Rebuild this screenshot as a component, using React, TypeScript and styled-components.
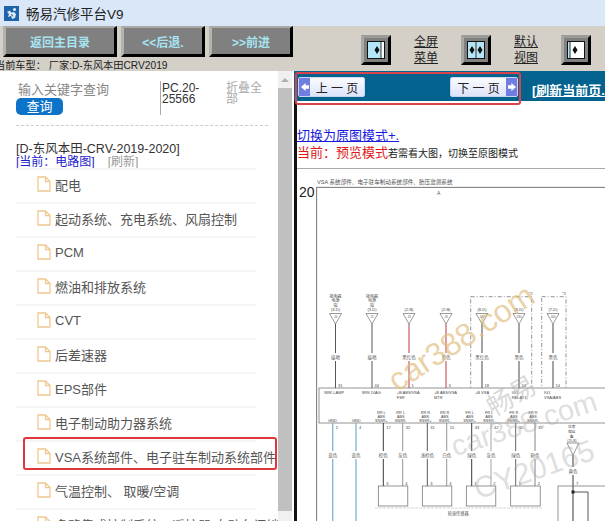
import React from 'react';
import styled, { createGlobalStyle } from 'styled-components';

const GlobalStyle = createGlobalStyle`
  html, body {
    margin: 0;
    padding: 0;
    width: 605px;
    height: 521px;
    overflow: hidden;
    background: #fff;
    font-family: "Liberation Sans", "Noto Sans CJK SC", sans-serif;
  }
`;

const Page = styled.div`
  width: 605px;
  height: 521px;
  display: flex;
  flex-direction: column;
  overflow: hidden;
`;

const TitleBar = styled.div`
  height: 26px;
  flex-shrink: 0;
  background: #d9e7f8;
  display: flex;
  align-items: center;
  gap: 7px;
  padding-left: 4px;
  font-size: 13.5px;
  color: #222;
`;

const Toolbar = styled.div`
  height: 45px;
  flex-shrink: 0;
  background: #d4d0c8;
  position: relative;
  display: flex;
  padding-left: 3px;
  gap: 4px;
`;

const NavButton = styled.div<{ $w: number }>`
  width: ${p => p.$w}px;
  height: 31px;
  box-sizing: border-box;
  background: #808080;
  color: #a6e4f2;
  font-size: 12px;
  font-weight: bold;
  display: flex;
  align-items: center;
  justify-content: center;
  border-style: solid;
  border-width: 2px 3px 3px 3px;
  border-color: #a9a9a5 #000 #000 #b4b4ae;
`;

const ToolSpacer = styled.div`
  width: 60px;
`;

const ViewGroup = styled.div`
  display: flex;
  align-items: flex-start;
`;

const ViewButton = styled.div`
  width: 30px;
  height: 30px;
  margin-top: 9px;
  box-sizing: border-box;
  background: #808080;
  border-style: solid;
  border-width: 3px;
  border-color: #9b9b97 #000 #000 #a9a9a5;
  display: flex;
  align-items: center;
  justify-content: center;
  svg { display: block; }
`;

const ViewLabel = styled.div`
  width: 70px;
  margin-top: 8px;
  text-align: center;
  font-size: 12px;
  line-height: 16px;
  color: #222;
  text-decoration: underline;
`;

const CarLine = styled.div`
  position: absolute;
  left: -5px;
  top: 35px;
  font-size: 10.2px;
  line-height: 10px;
  color: #222;
  white-space: nowrap;
`;

const Body = styled.div`
  flex: 1;
  min-height: 0;
  display: flex;
`;

const Sidebar = styled.div`
  width: 278px;
  flex-shrink: 0;
  overflow: hidden;
  box-sizing: border-box;
  padding: 10px 0 0 16px;
`;

const SearchRow = styled.div`
  display: flex;
  width: 252px;
  height: 37px;
`;

const SearchCol = styled.div`
  width: 144px;
  box-sizing: border-box;
  padding: 1px 0 0 2px;
  color: #888;
  font-size: 13px;
  line-height: 15px;
`;

const SearchButton = styled.div`
  width: 47px;
  height: 17px;
  margin: 1px 0 0 -2px;
  border-radius: 5px;
  background: #0d73c9;
  color: #fff;
  text-align: center;
  font-size: 13px;
  line-height: 17px;
`;

const Code = styled.div`
  width: 66px;
  box-sizing: border-box;
  padding-left: 1px;
  border-left: 1px solid #aaa;
  font-size: 12px;
  line-height: 11px;
  color: #333;
  height: 34px;
  padding-top: 2px;
`;

const Collapse = styled.div`
  width: 40px;
  font-size: 12px;
  line-height: 11px;
  color: #aaa;
  padding-top: 2px;
`;

const Dashed = styled.div`
  width: 252px;
  margin-top: 7px;
  border-top: 1px dashed #ccc;
`;

const TreeTitle = styled.div`
  margin-top: 17px;
  font-size: 12.5px;
  line-height: 13px;
  color: #333;
`;

const TreeSub = styled.div`
  display: flex;
  gap: 13px;
  font-size: 12px;
  line-height: 12px;
  color: #2222cc;
  span + span { color: #999; }
`;

const TreeRow = styled.div<{ $active?: boolean }>`
  width: 240px;
  height: 34px;
  box-sizing: border-box;
  border-top: 2px solid #f5f5f5;
  padding: 0 0 4px 21px;
  display: flex;
  align-items: center;
  gap: 4px;
  font-size: 13px;
  color: #555;
  white-space: nowrap;
  position: relative;
  svg { flex-shrink: 0; }
  ${p => p.$active && `
    &::after {
      content: '';
      position: absolute;
      left: 7px;
      top: -5px;
      width: 254px;
      height: 33px;
      box-sizing: border-box;
      border: 2px solid #e0353b;
      border-radius: 3px;
    }
  `}
`;

const Scrollbar = styled.div`
  width: 14px;
  flex-shrink: 0;
  background: #f0f0f0;
  display: flex;
  flex-direction: column;
  align-items: center;
`;

const ScrollArrow = styled.div`
  margin-top: 7px;
  width: 0;
  height: 0;
  border-left: 4px solid transparent;
  border-right: 4px solid transparent;
  border-bottom: 4px solid #b0b0b0;
`;

const ScrollThumb = styled.div`
  width: 14px;
  height: 423px;
  margin-top: 6px;
  background: #c0c0c0;
`;

const Divider = styled.div`
  width: 3px;
  flex-shrink: 0;
  margin-left: 2px;
  background: linear-gradient(#04628f 30px, #111 30px);
`;

const Content = styled.div`
  flex: 1;
  min-width: 0;
  position: relative;
`;

const PageBar = styled.div`
  height: 30px;
  background: #04628f;
  display: flex;
  align-items: center;
  padding-left: 1px;
  position: relative;
  white-space: nowrap;
`;

const PageButton = styled.div<{ $next?: boolean }>`
  width: ${p => (p.$next ? 68 : 67)}px;
  height: 20px;
  flex-shrink: 0;
  margin-top: 2px;
  margin-left: ${p => (p.$next ? 85 : 0)}px;
  box-sizing: border-box;
  border: 1px solid #c9d6f2;
  border-radius: 2px;
  background: linear-gradient(#fbfbff, #dde3fa);
  display: flex;
  flex-direction: ${p => (p.$next ? 'row-reverse' : 'row')};
  align-items: center;
  font-size: 12px;
  color: #222;
`;

const ArrowCap = styled.div`
  width: 11px;
  height: 100%;
  background: #6f7ee0;
  display: flex;
  align-items: center;
  justify-content: center;
`;

const PageButtonText = styled.span`
  flex: 1;
  text-align: center;
  white-space: pre;
`;

const Refresh = styled.div`
  margin-left: 14px;
  margin-top: 6px;
  color: #fff;
  font-size: 13px;
  font-weight: bold;
  text-decoration: underline;
`;

const RedBox = styled.div`
  position: absolute;
  left: -2px;
  top: 1px;
  width: 226px;
  height: 33px;
  box-sizing: border-box;
  border: 2px solid #d9434b;
  border-radius: 3px;
`;

const ModeBlock = styled.div`
  height: 68px;
  box-sizing: border-box;
  padding-top: 26px;
  border-bottom: 1px solid #aaa;
`;

const ModeLink = styled.div`
  font-size: 13px;
  line-height: 17px;
  color: #1a1ae0;
  text-decoration: underline;
`;

const ModeLine = styled.div`
  font-size: 13px;
  line-height: 17px;
  color: #e01818;
  white-space: nowrap;
  span { color: #222; font-size: 10px; }
`;

const Diagram = styled.svg`
  display: block;
  background: #fff;
`;

const Watermark = styled.div<{ $size: number; $x: number; $y: number; $rot: number; $color: string }>`
  position: absolute;
  left: ${p => p.$x}px;
  top: ${p => p.$y}px;
  font-size: ${p => p.$size}px;
  line-height: 1;
  color: ${p => p.$color};
  transform: rotate(${p => p.$rot}deg);
  transform-origin: left center;
  white-space: nowrap;
  pointer-events: none;
`;

const FileIcon = () => (
  <svg width="14" height="16" viewBox="0 0 14 16" fill="none" stroke="#f0c890" strokeWidth="1.3">
    <path d="M1 1h7.500l4.500 4.500V15H1z" />
    <path d="M8.500 1v4.500H13" />
  </svg>
);

const Logo = () => (
  <svg width="15" height="15" viewBox="0 0 15 15">
    <rect width="15" height="15" fill="#1f63a8" />
    <circle cx="10.500" cy="3.500" r="1.500" fill="#e8f2fa" />
    <path d="M3 6l3-1.500 1 2 3-.5 2 2-1 4-3 1-1-3-3 1 1-3z" fill="#dce9f4" />
    <path d="M7 8l2 1-1 2z" fill="#1f63a8" />
  </svg>
);

const SplitIcon = ({ bars, diamonds, blueTo }: { bars: number; diamonds: number[]; blueTo: number }) => (
  <svg width="18" height="18" viewBox="0 0 18 18">
    <rect x="0.5" y="0.5" width="17" height="17" fill="#fff" stroke="#111" />
    <rect x="1" y="1" width={blueTo} height="16" fill="#b5e6f7" />
    <line x1={bars} y1="1" x2={bars} y2="17" stroke="#333" />
    {diamonds.map(x => (
      <path key={x} d={`M${x - 2.500} 9l2.500-4 2.500 4-2.500 4z`} fill="#111" />
    ))}
  </svg>
);

const tri = [
  { x: 38.5, t: ['接电器', '电源', '指', '(3-D)'], pin: '31', n: 'J4', c: '#444', w: '接地' },
  { x: 75, t: ['接电器', '电源', '指', '(3-D)'], pin: '44', n: 'J2', c: '#444', w: '接地' },
  { x: 112, t: ['(2-B)'], pin: '1', n: 'J3', c: '#b3242c', w: '黑红色' },
  { x: 149, t: ['(2-B)'], pin: '3', n: 'J9', c: '#b3242c', w: '黑色' },
  { x: 185, t: ['(8-D)'], pin: '18', n: 'J40', c: '#333', w: '黑红色' },
  { x: 222, t: ['(8-D)'], pin: '14', n: 'J30', c: '#333', w: '黑色' },
  { x: 256, t: ['(7-D)'], pin: '14', n: 'J40', c: '#333', w: '黑色' },
];

const lowers = [
  { x: 86.3, pin: '17', l: ['RR L', 'ABS', 'SNSR+'], c: '#222', w: '棕色' },
  { x: 105.7, pin: '32', l: ['RR L', 'ABS', 'SNSR-'], c: '#888', w: '灰色' },
  { x: 130.3, pin: '31', l: ['RR R', 'ABS', 'SNSR+'], c: '#444', w: '浅棕色' },
  { x: 149.7, pin: '15', l: ['RR R', 'ABS', 'SNSR-'], c: '#888', w: '白色' },
  { x: 174.7, pin: '33', l: ['FR L', 'ABS', 'SNSR+'], c: '#222', w: '绿色' },
  { x: 194, pin: '42', l: ['FR L', 'ABS', 'SNSR-'], c: '#999', w: '灰色' },
  { x: 218.7, pin: '30', l: ['FR R', 'ABS', 'SNSR+'], c: '#555', w: '绿色' },
  { x: 238, pin: '35', l: ['FR R', 'ABS', 'SNSR-'], c: '#777', w: '粉色' },
];

const topLabels: [number, number, string][] = [
  [27, 225, 'SRK LAMP'],
  [64.7, 225, 'SRK DIAG'],
  [99.7, 225, '+B ABS/VSA'],
  [99.7, 230, 'FSR'],
  [137, 225, '+B ABS/VSA'],
  [137, 230, 'MTR'],
  [178, 225, '+B VSA'],
  [214.7, 225, 'IG1'],
  [214.7, 230, 'RELAY1'],
  [247, 225, 'IG1'],
  [247, 230, 'VSA/ABS'],
  [31, 252.5, 'GND'],
  [54.7, 252.5, 'GND'],
];

const WiringDiagram = () => (
  <Diagram width="308" height="352" viewBox="0 0 308 352" fontFamily='"Liberation Sans", "Noto Sans CJK SC", sans-serif'>
    <text x="20" y="14.500" fontSize="5.600" fill="#555">VSA 系统部件、电子驻车制动系统部件、胎压监测系统</text>
    <text x="2" y="28" fontSize="14" fill="#222">20</text>
    <rect x="19.700" y="18.300" width="320" height="350" fill="none" stroke="#555" strokeWidth="0.8" />
    <text x="140" y="26" fontSize="5" fill="#555">A</text>
    <path d="M173.700 127.700H234.700V232H173.700z" fill="none" stroke="#666" strokeWidth="0.7" strokeDasharray="4 2 1 2" />
    <path d="M244.700 127.700H269V232H244.700z" fill="none" stroke="#666" strokeWidth="0.7" strokeDasharray="4 2 1 2" />
    <text x="232" y="126" fontSize="4" fill="#555">*2</text>
    <text x="265" y="126" fontSize="4" fill="#555">*3</text>

    {tri.map(t => (
      <g key={t.x}>
        {t.t.map((s, i) => (
          <text key={i} x={t.x} y={(t.t.length === 1 ? 142 : 129) + i * 4.3} fontSize="4" fill="#444" textAnchor="middle">{s}</text>
        ))}
        <path d={`M${t.x - 6} 144.500h12l-6 10.500z`} fill="#fff" stroke="#555" strokeWidth="0.6" />
        <text x={t.x} y="149" fontSize="3" fill="#555" textAnchor="middle">{t.n}</text>
        <line x1={t.x} y1="155" x2={t.x} y2="219" stroke={t.c} strokeWidth="0.9" />
        <rect x={t.x - 7} y="184" width="14" height="8" fill="#fff" />
        <text x={t.x} y="190" fontSize="4.500" fill="#555" textAnchor="middle">{t.w}</text>
        <text x={t.x + 2.500} y="218" fontSize="4" fill="#444">{t.pin}</text>
      </g>
    ))}

    <rect x="22" y="219" width="320" height="35" fill="#fff" stroke="#666" strokeWidth="0.7" />
    {topLabels.map(([x, y, s]) => (
      <text key={`${x}-${y}`} x={x} y={y} fontSize="4" fill="#444">{s}</text>
    ))}

    {[35.7, 59].map((x, i) => (
      <g key={x}>
        <line x1={x} y1="254" x2={x} y2="352" stroke="#7fb2d4" strokeWidth="1.3" />
        <rect x={x - 5} y="282" width="10" height="8" fill="#fff" />
        <text x={x} y="288" fontSize="4.500" fill="#555" textAnchor="middle">蓝色</text>
        <text x={x + 3} y="260" fontSize="4" fill="#444">{i === 0 ? '2' : '4'}</text>
      </g>
    ))}

    {lowers.map(l => (
      <g key={l.x}>
        {l.l.map((s, i) => (
          <text key={i} x={l.x - 2} y={245 + i * 4} fontSize="3.800" fill="#444" textAnchor="middle">{s}</text>
        ))}
        <line x1={l.x} y1="254" x2={l.x} y2="317" stroke={l.c} strokeWidth="0.9" />
        <rect x={l.x - 6} y="282" width="12" height="8" fill="#fff" />
        <text x={l.x} y="288" fontSize="4.500" fill="#555" textAnchor="middle">{l.w}</text>
        <text x={l.x + 3} y="260" fontSize="4" fill="#444">{l.pin}</text>
      </g>
    ))}

    {[81.3, 125.3, 169.3, 213.7].map((x, i) => (
      <g key={x}>
        <rect x={x} y="317" width="29.500" height="20" fill="#fff" stroke="#666" strokeWidth="0.7" />
        <text x={x + 8} y="315.500" fontSize="4" fill="#444">{i < 2 ? '3' : '1'}</text>
        <text x={x + 27} y="315.500" fontSize="4" fill="#444">{i < 2 ? '4' : '2'}</text>
      </g>
    ))}
    <line x1="78" y1="339" x2="245.700" y2="339" stroke="#bbb" strokeWidth="0.6" strokeDasharray="3 1" />
    <text x="150.700" y="346" fontSize="4.200" fill="#555">轮速传感器</text>

    <text x="274.700" y="259" fontSize="3.800" fill="#444" textAnchor="middle">仪表</text>
    <text x="274.700" y="264" fontSize="3.800" fill="#444" textAnchor="middle">熔丝</text>
    <text x="274.700" y="268.500" fontSize="3.800" fill="#444" textAnchor="middle">盒</text>
    <text x="275" y="273" fontSize="3.400" fill="#444" textAnchor="middle">(25-B)</text>
    <path d="M270 274h12l-6 12z" fill="#fff" stroke="#555" strokeWidth="0.6" />
    <line x1="276" y1="286" x2="276" y2="352" stroke="#222" strokeWidth="0.9" />
    <rect x="271" y="298" width="10" height="8" fill="#fff" />
    <text x="276" y="304" fontSize="4.500" fill="#555" textAnchor="middle">黄色</text>
    <text x="279" y="315.500" fontSize="4" fill="#444">7</text>
    <rect x="261" y="317" width="60" height="40" fill="none" stroke="#666" strokeWidth="0.7" />
    <path d="M276 323h15v29" fill="none" stroke="#444" strokeWidth="0.9" />
    <rect x="274.500" y="321.500" width="3" height="3" fill="#222" />
  </Diagram>
);

export default function App() {
  const items = [
    '配电',
    '起动系统、充电系统、风扇控制',
    'PCM',
    '燃油和排放系统',
    'CVT',
    '后差速器',
    'EPS部件',
    '电子制动助力器系统',
    'VSA系统部件、电子驻车制动系统部件',
    '气温控制、 取暖/空调',
    '多路集成控制系统、遥控器/自动车门锁',
  ];

  return (
    <Page>
      <GlobalStyle />
      <TitleBar>
        <Logo />
        <span>畅易汽修平台V9</span>
      </TitleBar>
      <Toolbar>
        <NavButton $w={114}>返回主目录</NavButton>
        <NavButton $w={84}>&lt;&lt;后退.</NavButton>
        <NavButton $w={84}>&gt;&gt;前进</NavButton>
        <ToolSpacer />
        <ViewGroup>
          <ViewButton><SplitIcon blueTo={13} bars={14} diamonds={[10]} /></ViewButton>
          <ViewLabel>全屏<br />菜单</ViewLabel>
          <ViewButton><SplitIcon blueTo={16} bars={9} diamonds={[5, 13]} /></ViewButton>
          <ViewLabel>默认<br />视图</ViewLabel>
          <ViewButton><SplitIcon blueTo={2} bars={3} diamonds={[8]} /></ViewButton>
        </ViewGroup>
        <CarLine>当前车型： 厂家:D-东风本田CRV2019</CarLine>
      </Toolbar>
      <Body>
        <Sidebar>
          <SearchRow>
            <SearchCol>
              输入关键字查询
              <SearchButton>查询</SearchButton>
            </SearchCol>
            <Code>PC.20-<br />25566</Code>
            <Collapse>折叠全<br />部</Collapse>
          </SearchRow>
          <Dashed />
          <TreeTitle>[D-东风本田-CRV-2019-2020]</TreeTitle>
          <TreeSub>
            <span>[当前：电路图]</span>
            <span>[刷新]</span>
          </TreeSub>
          {items.map(item => (
            <TreeRow key={item} $active={item.startsWith('VSA')}>
              <FileIcon />
              {item}
            </TreeRow>
          ))}
        </Sidebar>
        <Scrollbar>
          <ScrollArrow />
          <ScrollThumb />
        </Scrollbar>
        <Divider />
        <Content>
          <PageBar>
            <PageButton>
              <ArrowCap>
                <svg width="8" height="8" viewBox="0 0 7 7"><path d="M0 3.500L4 0v2h3v3H4v2z" fill="#fff" /></svg>
              </ArrowCap>
              <PageButtonText>上 一 页</PageButtonText>
            </PageButton>
            <PageButton $next>
              <ArrowCap>
                <svg width="8" height="8" viewBox="0 0 7 7"><path d="M7 3.500L3 0v2H0v3h3v2z" fill="#fff" /></svg>
              </ArrowCap>
              <PageButtonText>下 一 页</PageButtonText>
            </PageButton>
            <Refresh>[刷新当前页.</Refresh>
            <RedBox />
          </PageBar>
          <ModeBlock>
            <ModeLink>切换为原图模式+.</ModeLink>
            <ModeLine>当前：预览模式<span>若需看大图，切换至原图模式</span></ModeLine>
          </ModeBlock>
          <WiringDiagram />
          <Watermark $size={32} $x={94} $y={296} $rot={-33} $color="rgba(225,190,130,0.7)">car388.com</Watermark>
          <Watermark $size={26} $x={192} $y={325} $rot={-30} $color="rgba(170,170,170,0.45)">畅易</Watermark>
          <Watermark $size={29} $x={155} $y={362} $rot={-18} $color="rgba(170,170,170,0.4)">car388.com</Watermark>
          <Watermark $size={30} $x={178} $y={404} $rot={-19} $color="rgba(170,170,170,0.4)">CY20165</Watermark>
        </Content>
      </Body>
    </Page>
  );
}
